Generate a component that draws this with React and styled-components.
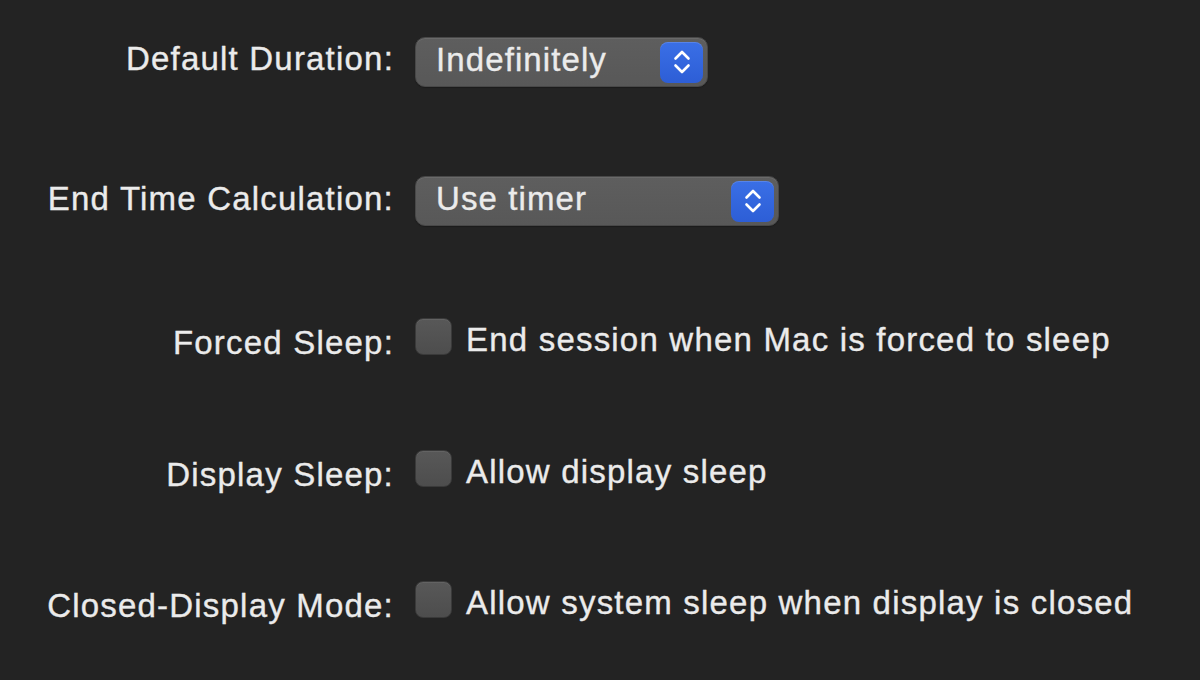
import React from 'react';
import styled, { createGlobalStyle } from 'styled-components';

const GlobalStyle = createGlobalStyle`
	html, body {
		margin: 0;
		padding: 0;
		background: #232323;
	}
	body {
		font-family: 'Liberation Sans', Arial, sans-serif;
		color: #ebebeb;
		-webkit-text-stroke: 0.35px #ebebeb;
	}
`;

const Page = styled.div`
	width: 1200px;
	height: 680px;
	overflow: hidden;
	display: flex;
	flex-direction: column;
	padding-top: 37px;
	box-sizing: border-box;
`;

const Row = styled.div`
	display: grid;
	grid-template-columns: 394px auto;
	column-gap: 21px;
	align-items: center;
	margin-top: ${(p) => p.$top || 0}px;
`;

// $shift moves the text up or down without changing the row height
const Label = styled.div`
	justify-self: end;
	font-size: 33px;
	line-height: 1;
	letter-spacing: 1.2px;
	white-space: nowrap;
	margin-top: ${(p) => p.$shift || 0}px;
	margin-bottom: ${(p) => -(p.$shift || 0)}px;
`;

const Popup = styled.div`
	width: ${(p) => p.$width}px;
	height: 50px;
	box-sizing: border-box;
	border-radius: 10px;
	background: linear-gradient(#5e5e5e, #585858);
	border: 1px solid #484848;
	box-shadow: inset 0 1px 0 rgba(255, 255, 255, 0.08), 0 1px 1px rgba(0, 0, 0, 0.25);
	display: flex;
	align-items: center;
	padding: 0 4px 0 20px;
`;

const PopupText = styled.span`
	flex: 1;
	font-size: 33px;
	line-height: 1;
	letter-spacing: 1.1px;
	padding-bottom: 5px;
	white-space: nowrap;
`;

const Stepper = styled.div`
	width: 43px;
	height: 41px;
	border-radius: 8px;
	background: linear-gradient(#3a6fe6, #2d5ed6);
	box-shadow: inset 0 1px 0 rgba(255, 255, 255, 0.15);
	display: flex;
	align-items: center;
	justify-content: center;
`;

const Check = styled.div`
	display: flex;
	align-items: center;
	gap: 14px;
`;

const Box = styled.div`
	width: 37px;
	height: 37px;
	box-sizing: border-box;
	border-radius: 8px;
	background: linear-gradient(#585858, #4d4d4d);
	border: 1px solid #3a3a3a;
	box-shadow: inset 0 1px 0 rgba(255, 255, 255, 0.07);
	flex-shrink: 0;
`;

const CheckText = styled.span`
	font-size: 33px;
	line-height: 1;
	letter-spacing: 1.2px;
	white-space: nowrap;
	margin-top: 3px;
	margin-bottom: -3px;
`;

const Chevrons = () => (
	<svg width='20' height='28' viewBox='0 0 20 28' fill='none'>
		<path
			d='M3.5 10.5 L10 4 L16.5 10.5 M3.5 17.5 L10 24 L16.5 17.5'
			stroke='#ffffff'
			strokeWidth='2.6'
			strokeLinecap='round'
			strokeLinejoin='round'
		/>
	</svg>
);

const Select = ({ value, width }) => (
	<Popup $width={width}>
		<PopupText>{value}</PopupText>
		<Stepper>
			<Chevrons />
		</Stepper>
	</Popup>
);

const Checkbox = ({ text }) => (
	<Check>
		<Box />
		<CheckText>{text}</CheckText>
	</Check>
);

export default function App() {
	return (
		<>
			<GlobalStyle />
			<Page>
				<Row>
					<Label $shift={-4}>Default Duration:</Label>
					<Select value='Indefinitely' width={293} />
				</Row>
				<Row $top={89}>
					<Label $shift={-3}>End Time Calculation:</Label>
					<Select value='Use timer' width={364} />
				</Row>
				<Row $top={92}>
					<Label $shift={5.5}>Forced Sleep:</Label>
					<Checkbox text='End session when Mac is forced to sleep' />
				</Row>
				<Row $top={95}>
					<Label $shift={5.5}>Display Sleep:</Label>
					<Checkbox text='Allow display sleep' />
				</Row>
				<Row $top={94}>
					<Label $shift={5.5}>Closed-Display Mode:</Label>
					<Checkbox text='Allow system sleep when display is closed' />
				</Row>
			</Page>
		</>
	);
}
